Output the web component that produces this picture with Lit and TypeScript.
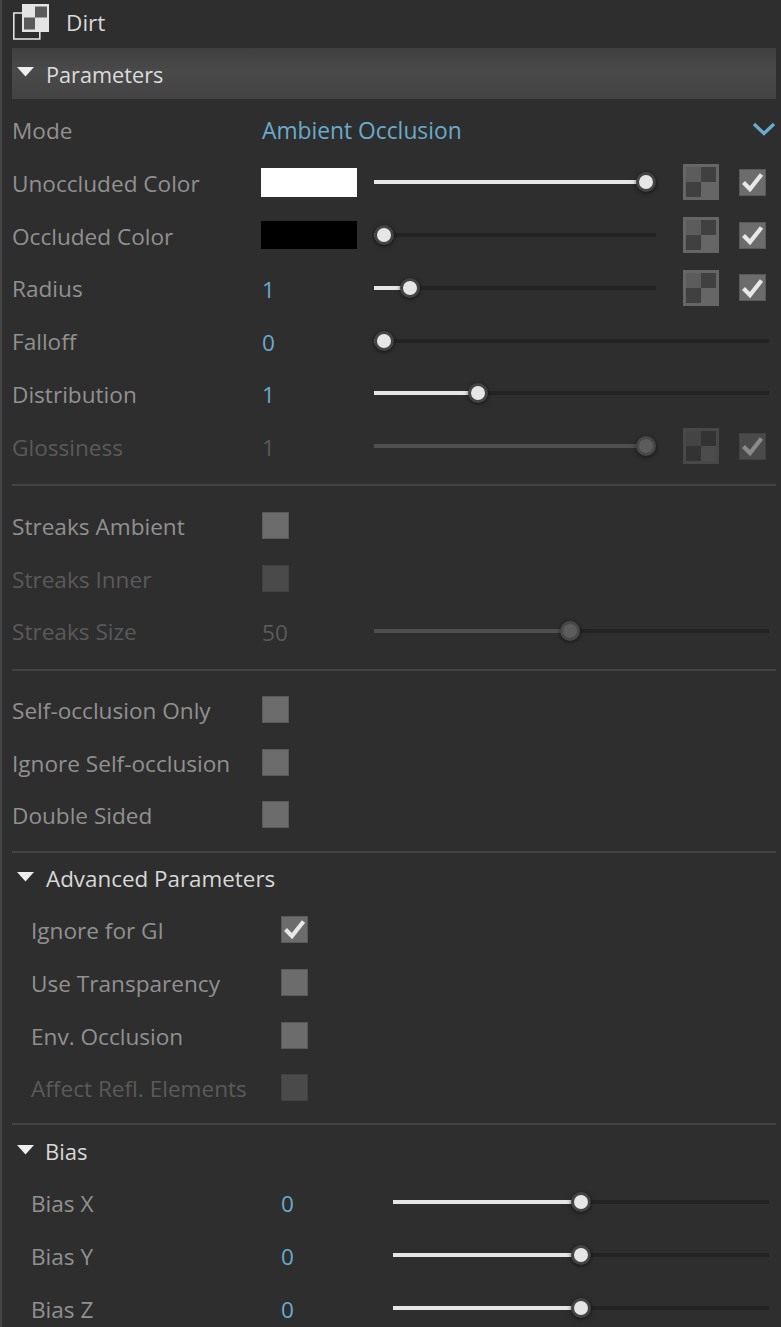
import { LitElement, html, css, nothing } from "lit";
import { customElement } from "lit/decorators.js";

const check = html`<svg viewBox="0 0 27 27" width="27" height="27"><path d="M4.5 14.5 L11 21 L22.5 6.5" fill="none" stroke="#e8e8e8" stroke-width="4.2"/></svg>`;

@customElement("app-root")
export class AppRoot extends LitElement {
  static styles = css`
    :host { display: block; width: 781px; height: 1327px; overflow: hidden; background: #2e2e2e; font-family: "Open Sans", "Noto Sans", sans-serif; font-size: 22.6px; color: #919191; box-sizing: border-box; border-left: 2px solid #444; }
    .panel { display: flex; flex-direction: column; padding: 0 5px 0 10px; }
    .top { height: 48px; box-sizing: border-box; padding: 0 0 4px 11px; display: flex; align-items: center; margin-left: -10px; gap: 15px; color: #d8d8d8; font-size: 22.6px; }
    .top svg { flex: none; }
    .bar { height: 51px; display: flex; align-items: center; background: linear-gradient(#3f3f3f, #4a4a4a 45%, #434343); color: #dcdcdc; margin-bottom: 5.6px; font-size: 21.7px; }
    .bar span { margin-top: 2px; }
    .tri { width: 17px; height: 10px; margin: 0 12px 3px 5px; flex: none; }
    .head { height: 52.8px; display: flex; align-items: center; color: #d8d8d8; font-size: 22.4px; }
    .head.short span { font-size: 22px; margin-left: -1px; }
    .row { height: 52.8px; display: flex; align-items: center; padding-right: 7px; }
    .row.sub { padding-left: 19px; }
    .label { width: 250px; flex: none; white-space: nowrap; margin-top: -1px; }
    .ctl { display: flex; align-items: center; flex: 1; margin-top: -3px; min-width: 0; }
    .val { width: 112px; flex: none; color: #69abcc; margin-top: 3px; }
    .dis, .dis .val { color: #5a5a5a; }
    .mode { color: #69abcc; flex: 1; font-size: 22.8px; margin-top: 3px; }
    .chev { margin: 0 -7px 0 0; flex: none; }
    .swatch { width: 96px; height: 29px; flex: none; margin: 0 17px 0 -1px; }
    .white { background: #fff; }
    .black { background: #000; height: 28px; }
    .track { flex: 1; height: 4px; background: #232323; position: relative; display: flex; }
    .fill { background: #e6e6e6; height: 4px; }
    .thumb { position: absolute; top: -8px; width: 20px; height: 20px; margin-left: -10px; box-sizing: border-box; border-radius: 50%; background: #e6e6e6; border: 3px solid #444; box-shadow: 0 1px 4px rgba(0,0,0,.6); }
    .dis .fill { background: #4f4f4f; }
    .dis .thumb { background: #5c5c5c; border-color: #484848; }
    .tex { flex: none; margin: 0 20px 0 27px; display: block; }
    .cb { width: 27px; height: 27px; box-sizing: border-box; flex: none; background: #6c6c6c; border: 1.5px solid #595959; position: relative; }
    .cb.end { margin-right: 3px; }
    .cb svg { position: absolute; left: -1.5px; top: -1.5px; }
    .dis .cb { background: #4a4a4a; border-color: #414141; }
    .dis .cb svg path { stroke: #8a8a8a; }
    .hr { height: 2px; background: #444; flex: none; }
    .d1 { margin: 10.2px 0 14px; }
    .d2 { margin: 10px 0 13.6px; }
    .d3 { margin: 8px 0 -1px; }
    .d4 { margin: 7px 0 0; }
  `;

  tri() {
    return html`<svg class="tri" viewBox="0 0 17 10"><path d="M0 0 H17 L8.5 9.5 Z" fill="#eee"/></svg>`;
  }

  tex(dis = false) {
    const [edge, a, b, c] = dis ? ["#484848", "#444", "#333", "#4c4c4c"] : ["#666", "#5c5c5c", "#404040", "#666"];
    return html`<svg class="tex" width="36" height="36" viewBox="0 0 36 36">
      <rect width="36" height="36" fill=${edge}/>
      <rect x="3" y="3" width="15" height="15" fill=${a}/>
      <rect x="18" y="3" width="15" height="15" fill=${b}/>
      <rect x="3" y="18" width="15" height="15" fill=${b}/>
      <rect x="18" y="18" width="15" height="15" fill=${c}/>
    </svg>`;
  }

  cb(on = false, end = false) {
    return html`<div class="cb ${end ? "end" : ""}">${on ? check : nothing}</div>`;
  }

  /* pct: thumb position from 0 to 1 along the thumb's travel */
  slider(pct: number) {
    const left = `calc(10px + (100% - 20px) * ${pct})`;
    return html`<div class="track"><div class="fill" style="width:${left}"></div><div class="thumb" style="left:${left}"></div></div>`;
  }

  sliderRow(label: string, val: string, pct: number, opts: { sub?: boolean; dis?: boolean; extras?: boolean } = {}) {
    return html`<div class="row ${opts.sub ? "sub" : ""} ${opts.dis ? "dis" : ""}">
      <div class="label">${label}</div>
      <div class="ctl"><div class="val">${val}</div>${this.slider(pct)}${opts.extras ? html`${this.tex(opts.dis)}${this.cb(true, true)}` : nothing}</div>
    </div>`;
  }

  colorRow(label: string, cls: string, pct: number) {
    return html`<div class="row"><div class="label">${label}</div>
      <div class="ctl"><div class="swatch ${cls}"></div>${this.slider(pct)}${this.tex()}${this.cb(true, true)}</div></div>`;
  }

  cbRow(label: string, opts: { sub?: boolean; dis?: boolean; on?: boolean } = {}) {
    return html`<div class="row ${opts.sub ? "sub" : ""} ${opts.dis ? "dis" : ""}">
      <div class="label">${label}</div><div class="ctl">${this.cb(opts.on)}</div></div>`;
  }

  render() {
    return html`<div class="panel">
      <div class="top">
        <svg width="38" height="38" viewBox="0 0 38 38">
          <rect x="0.8" y="10" width="26" height="26" fill="none" stroke="#e0e0e0" stroke-width="1.6"/>
          <rect x="9" y="1" width="27" height="28" fill="#e4e4e4"/>
          <rect x="22" y="3.5" width="12" height="11" fill="#5a5a5a"/>
          <rect x="11" y="14.5" width="11" height="12" fill="#5a5a5a"/>
        </svg>
        <span>Dirt</span>
      </div>
      <div class="bar">${this.tri()}<span>Parameters</span></div>
      <div class="row"><div class="label">Mode</div>
        <div class="ctl"><div class="mode">Ambient Occlusion</div>
          <svg class="chev" width="24" height="14" viewBox="0 0 24 14"><path d="M2 2 L12 11.5 L22 2" fill="none" stroke="#69abcc" stroke-width="3.4"/></svg>
        </div></div>
      ${this.colorRow("Unoccluded Color", "white", 1)}
      ${this.colorRow("Occluded Color", "black", 0)}
      ${this.sliderRow("Radius", "1", 0.1, { extras: true })}
      ${this.sliderRow("Falloff", "0", 0)}
      ${this.sliderRow("Distribution", "1", 0.25)}
      ${this.sliderRow("Glossiness", "1", 1, { dis: true, extras: true })}
      <div class="hr d1"></div>
      ${this.cbRow("Streaks Ambient")}
      ${this.cbRow("Streaks Inner", { dis: true })}
      ${this.sliderRow("Streaks Size", "50", 0.495, { dis: true })}
      <div class="hr d2"></div>
      ${this.cbRow("Self-occlusion Only")}
      ${this.cbRow("Ignore Self-occlusion")}
      ${this.cbRow("Double Sided")}
      <div class="hr d3"></div>
      <div class="head">${this.tri()}<span>Advanced Parameters</span></div>
      ${this.cbRow("Ignore for GI", { sub: true, on: true })}
      ${this.cbRow("Use Transparency", { sub: true })}
      ${this.cbRow("Env. Occlusion", { sub: true })}
      ${this.cbRow("Affect Refl. Elements", { sub: true, dis: true })}
      <div class="hr d4"></div>
      <div class="head short">${this.tri()}<span>Bias</span></div>
      ${this.sliderRow("Bias X", "0", 0.5, { sub: true })}
      ${this.sliderRow("Bias Y", "0", 0.5, { sub: true })}
      ${this.sliderRow("Bias Z", "0", 0.5, { sub: true })}
    </div>`;
  }
}
